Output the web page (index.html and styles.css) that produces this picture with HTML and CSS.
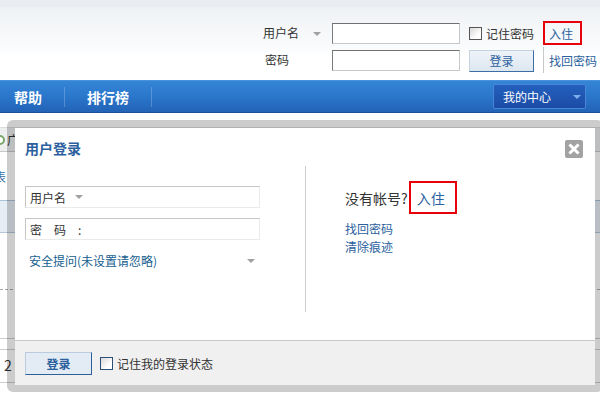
FILE: index.html
```html
<!DOCTYPE html>
<html lang="zh">
<head>
<meta charset="utf-8">
<title>用户登录</title>
<link rel="stylesheet" href="styles.css">
</head>
<body>
<div class="page">
  <header class="header">
    <form class="top-login">
      <div class="tl-label">用户名<span class="tri tri-gray"></span></div>
      <input class="tl-input" type="text">
      <label class="tl-remember"><span class="cbox"></span>记住密码</label>
      <div class="tl-reg"><a class="red-box" href="#">入住</a></div>
      <div class="tl-label tl-label2">密码</div>
      <input class="tl-input" type="password">
      <div class="tl-btn-cell"><button class="tl-btn" type="button">登录</button></div>
      <div class="tl-forgot"><a href="#">找回密码</a></div>
    </form>
  </header>
  <nav class="nav">
    <a class="nav-item first" href="#">帮助</a>
    <a class="nav-item" href="#">排行榜</a>
    <div class="nav-spacer"></div>
    <div class="my-center">我的中心<span class="tri tri-light"></span></div>
  </nav>
  <main class="behind">
    <div class="b-crumb"><span class="b-circle"></span><span class="b-crumb-text">广</span></div>
    <div class="b-title">表</div>
    <div class="b-band"></div>
    <div class="b-dash"></div>
    <div class="b-line"></div>
    <div class="b-num">2</div>
  </main>

  <div class="modal">
    <div class="modal-inner">
      <div class="m-head">
        <h3 class="m-title">用户登录</h3>
        <span class="m-close"><svg width="18" height="18" viewBox="0 0 18 18"><path d="M5.5 5.5 L12.5 12.5 M12.5 5.5 L5.5 12.5" stroke="#fff" stroke-width="3" stroke-linecap="square"/></svg></span>
      </div>
      <div class="m-body">
        <div class="m-left">
          <div class="m-field"><span class="m-field-label">用户名</span><span class="tri tri-gray"></span></div>
          <div class="m-field m-pass"><span class="sp">密</span><span class="sp">码</span><span class="sp">:</span></div>
          <div class="m-question">安全提问(未设置请忽略)<span class="tri tri-gray"></span></div>
        </div>
        <div class="m-divider"></div>
        <div class="m-right">
          <div class="m-noacc">没有帐号?<a class="red-box big" href="#">入住</a></div>
          <a class="m-link" href="#">找回密码</a>
          <a class="m-link" href="#">清除痕迹</a>
        </div>
      </div>
      <div class="m-foot">
        <button class="m-btn" type="button">登录</button>
        <label class="m-remember"><span class="cbox blue"></span>记住我的登录状态</label>
      </div>
    </div>
  </div>
</div>
</body>
</html>
```

FILE: styles.css
```css
* { box-sizing: border-box; }
html, body { margin: 0; padding: 0; }
body {
  font-family: "Noto Sans CJK SC", "Noto Sans", sans-serif;
  font-size: 12px;
  color: #333;
  background: #fff;
  width: 600px;
  height: 395px;
  overflow: hidden;
}
a { text-decoration: none; color: #2b5f9e; }
.page { position: relative; width: 600px; height: 395px; overflow: hidden; }

.tri { display: inline-block; width: 0; height: 0; border-left: 4px solid transparent; border-right: 4px solid transparent; border-top: 4px solid #999; }
.tri-gray { border-top-color: #a0a0a0; }
.tri-light { border-top-color: #7fb0ec; }

/* header */
.header {
  height: 80px;
  background: linear-gradient(to bottom, #e9edf1 0, #e9edf1 7px, #eff2f5 7px, #f4f6f8 26px, #fbfcfd 50px, #fff 56px);
  display: flex;
  justify-content: flex-end;
  padding-top: 21px;
}
.top-login {
  display: grid;
  grid-template-columns: 69px 128px 83px 57px;
  grid-template-rows: 24px 26px;
  row-gap: 2px;
  margin: 0;
}
.tl-label { display: flex; align-items: center; line-height: 16px; color: #333; }
.tl-label .tri { margin-left: 14px; margin-top: 1px; }
.tl-label2 { padding-left: 2px; }
.tl-input {
  align-self: center;
  width: 128px; height: 21px;
  margin: 0; padding: 0;
  border: 1px solid #c8c8c8;
  border-top-color: #707070; border-left-color: #7a7a7a;
  background: #fff;
}
.tl-remember { display: flex; align-items: center; padding-left: 9px; color: #333; }
.cbox {
  display: inline-block; width: 13px; height: 13px;
  border: 1px solid #555;
  background: linear-gradient(135deg, #d8d8d8, #fff 70%);
  margin-right: 4px;
}
.cbox.blue { border-color: #2c4f7a; }
.tl-reg { display: flex; align-items: stretch; }
.red-box { border: 2px solid #e8000b; color: #2b5f9e; display: inline-flex; align-items: center; }
.tl-reg .red-box { width: 39px; padding-left: 4px; }
.tl-btn-cell { display: flex; align-items: center; padding-left: 9px; }
.tl-btn {
  width: 65px; height: 22px; margin: 0; padding: 0;
  font: inherit; color: #2b5f9e;
  background: linear-gradient(#eef3f8, #dde7f1);
  border: 1px solid #3a6ea5;
  border-top-color: #c5d3e1; border-left-color: #c5d3e1;
  margin-top: 1px;
}
.tl-forgot { border-left: 1px solid #c8c8c8; display: flex; align-items: center; padding-left: 5px; }

/* nav */
.nav {
  height: 33px;
  background: linear-gradient(to bottom, #5b9fe2 0, #3585d6 1px, #2a77cc 16px, #2363b6 32px, #1b4f97 32px);
  display: flex;
  align-items: center;
}
.nav-item {
  color: #fff; font-size: 14px; font-weight: bold;
  padding: 0 22px; line-height: 20px;
  border-right: 1px solid rgba(140, 180, 230, 0.45);
}
.nav-item.first { padding-left: 14px; }
.nav-spacer { flex: 1; }
.my-center {
  width: 93px; height: 25px; margin-right: 14px;
  border: 1px solid #4a86d6; border-radius: 2px;
  background: linear-gradient(#2460be, #1b4ca6);
  color: #fff; font-size: 12px;
  display: flex; align-items: center; padding-left: 9px;
}
.my-center .tri { margin-left: 22px; }

/* page behind */
.behind { position: relative; }
.b-crumb {
  margin-top: 14px; height: 25px;
  background: #eceef0; border-top: 1px solid #dcdcdc; border-bottom: 1px solid #c8c8c8;
  display: flex; align-items: center;
}
.b-circle { width: 10px; height: 10px; border-radius: 50%; border: 2px solid #7aa86a; margin-left: -5px; background: #fff; }
.b-crumb-text { margin-left: 2px; }
.b-title { margin-top: 18px; color: #3a6ea5; margin-left: -6px; line-height: 14px; }
.b-band { margin-top: 16px; height: 33px; background: #e6eef5; border-top: 1px solid #a9c1d9; border-bottom: 1px solid #b5c7d9; }
.b-dash { margin-top: 56px; border-top: 1px dashed #aaa; }
.b-line { margin-top: 48px; height: 12px; border-top: 1px solid #ccc; border-bottom: 1px solid #ccc; }
.b-num { padding-left: 4px; font-size: 14px; line-height: 22px; border-bottom: 1px solid #ccc; height: 33px; padding-top: 4px; }

/* modal */
.modal {
  position: absolute; left: 7px; top: 120px;
  width: 596px; height: 272px;
  padding: 8px 8px 7px 8px;
  background: rgba(0, 0, 0, 0.2);
  border-radius: 6px;
}
.modal-inner { background: #fff; height: 100%; display: flex; flex-direction: column; }
.m-head { height: 38px; display: flex; align-items: center; justify-content: space-between; padding: 0 12px 0 10px; }
.m-title { margin: 0; font-size: 14px; font-weight: bold; color: #2b5f9e; padding-top: 2px; }
.m-close { width: 18px; height: 18px; background: #a2a2a2; border-radius: 2px; display: block; margin-top: 3px; }
.m-close svg { display: block; }
.m-body { flex: 1; display: flex; }
.m-left { width: 235px; margin-left: 10px; padding-top: 20px; }
.m-field {
  height: 22px; display: flex; align-items: center;
  border: 1px solid #eaeaea; border-top-color: #c6c6c6; border-left-color: #c6c6c6;
  padding-left: 4px;
}
.m-field .tri { margin-left: 9px; }
.m-pass { margin-top: 10px; }
.m-pass .sp { margin-right: 12px; }
.m-question { margin-top: 12px; padding-left: 4px; color: #16608f; display: flex; align-items: center; line-height: 18px; }
.m-question .tri { margin-left: auto; margin-right: 5px; }
.m-divider { width: 1px; height: 146px; background: #cfcfcf; margin-left: 45px; }
.m-right { padding-left: 39px; padding-top: 15px; display: flex; flex-direction: column; }
.m-noacc { font-size: 14px; color: #333; display: flex; align-items: center; height: 33px; margin-bottom: 6px; }
.red-box.big { font-size: 14px; height: 33px; width: 48px; padding-left: 6px; margin-left: 1px; }
.m-link { line-height: 18px; color: #2b5f9e; }
.m-foot {
  height: 45px; background: #f0f0f0; border-top: 1px solid #c8c8c8;
  display: flex; align-items: center; padding-left: 10px;
}
.m-btn {
  width: 67px; height: 23px; margin: 0; padding: 0;
  font: inherit; font-weight: bold; color: #2b5f9e;
  background: #e3ebf4;
  border: 1px solid #2d5f99; border-top-color: #b9cbdd; border-left-color: #b9cbdd;
}
.m-remember { display: flex; align-items: center; margin-left: 8px; color: #333; }
```
